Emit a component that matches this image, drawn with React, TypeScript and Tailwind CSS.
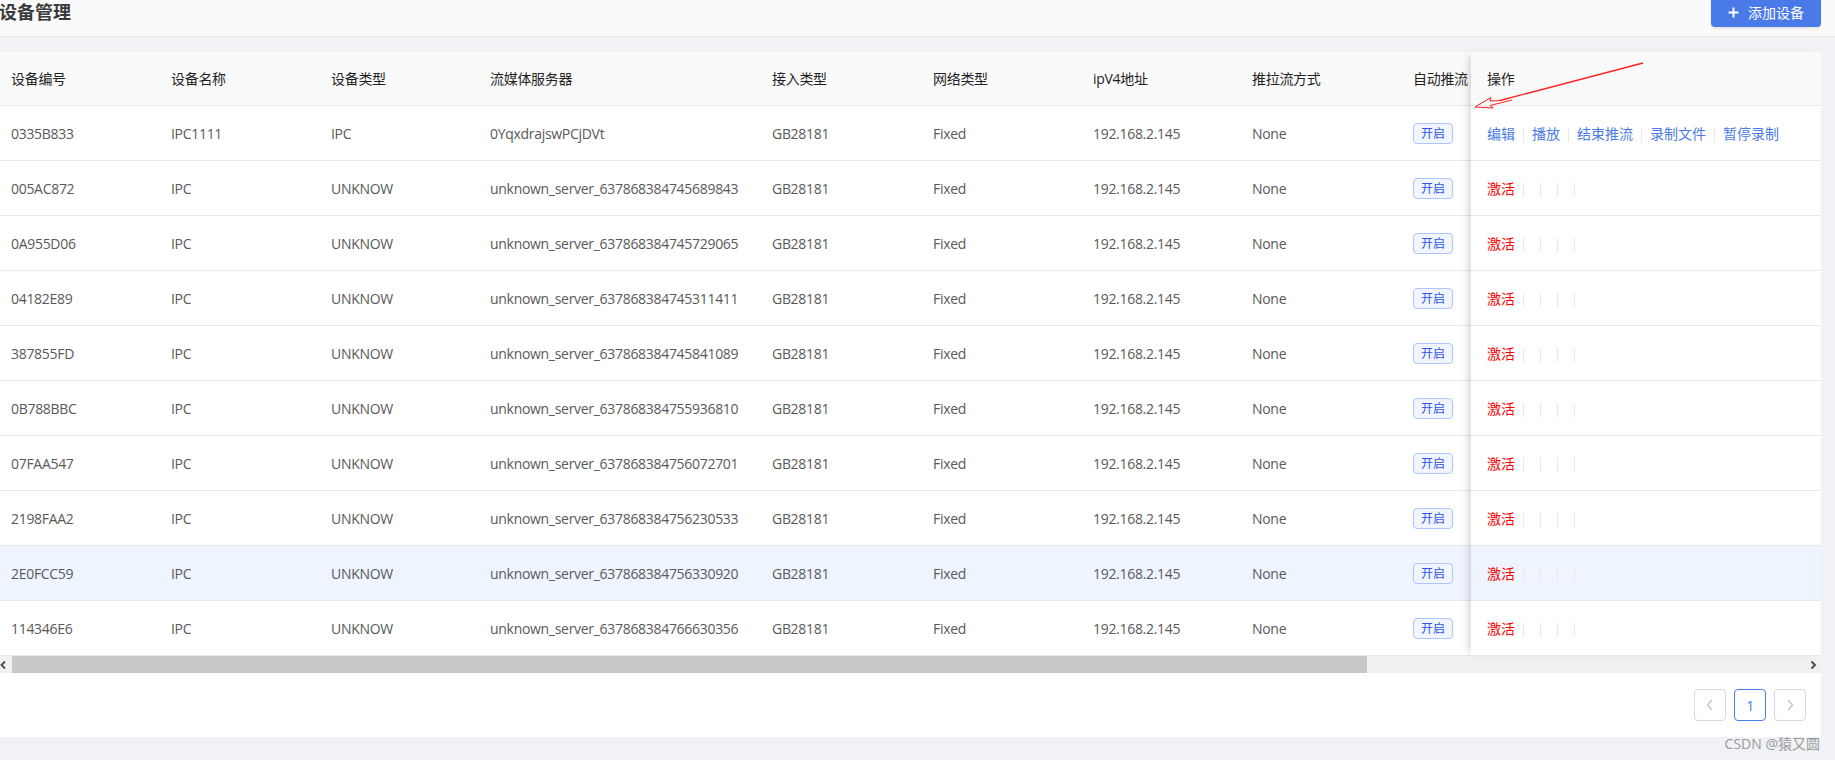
import React from "react";

const widths = [
  "w-[160px]",
  "w-[160px]",
  "w-[159px]",
  "w-[282px]",
  "w-[161px]",
  "w-[160px]",
  "w-[159px]",
  "w-[161px]",
  "w-[120px]",
];

const headers = ["设备编号", "设备名称", "设备类型", "流媒体服务器", "接入类型", "网络类型", "ipV4地址", "推拉流方式", "自动推流"];

const ids = [
  ["0335B833", "IPC1111", "IPC", "0YqxdrajswPCjDVt"],
  ["005AC872", "IPC", "UNKNOW", "unknown_server_637868384745689843"],
  ["0A955D06", "IPC", "UNKNOW", "unknown_server_637868384745729065"],
  ["04182E89", "IPC", "UNKNOW", "unknown_server_637868384745311411"],
  ["387855FD", "IPC", "UNKNOW", "unknown_server_637868384745841089"],
  ["0B788BBC", "IPC", "UNKNOW", "unknown_server_637868384755936810"],
  ["07FAA547", "IPC", "UNKNOW", "unknown_server_637868384756072701"],
  ["2198FAA2", "IPC", "UNKNOW", "unknown_server_637868384756230533"],
  ["2E0FCC59", "IPC", "UNKNOW", "unknown_server_637868384756330920"],
  ["114346E6", "IPC", "UNKNOW", "unknown_server_637868384766630356"],
];

const rows = ids.map((r) => [...r, "GB28181", "Fixed", "192.168.2.145", "None"]);

function Sep() {
  return <span className="mx-[8px] inline-block h-[14px] w-px bg-[#e8e8e8] align-middle" />;
}

export default function App() {
  return (
    <div className="relative h-[760px] w-[1835px] overflow-hidden bg-[#f0f2f5] font-['Open_Sans','Noto_Sans_CJK_SC',sans-serif] text-[14px] tracking-[-0.3px]">
      {/* top bar */}
      <div className="flex h-[37px] items-start justify-between border-b border-[#e8e8e8] bg-[#fafafa]">
        <div className="ml-[-1px] mt-[0px] text-[18px] font-bold leading-[24px] tracking-normal text-[#3a3a3a]">设备管理</div>
        <button className="mr-[14px] mt-[-5px] flex h-[32px] w-[110px] items-center justify-center gap-[9px] rounded-[4px] bg-[#4a7ae8] pt-[3px] text-[14px] tracking-normal text-white shadow-[0_2px_2px_rgba(0,0,0,0.08)]">
          <svg width="11" height="11" viewBox="0 0 11 11">
            <path d="M5.5 0.5V10.5M0.5 5.5H10.5" stroke="white" strokeWidth="2" />
          </svg>
          <span>添加设备</span>
        </button>
      </div>

      {/* card */}
      <div className="mr-[14px] mt-[15px] bg-white">
        <div className="flex">
          {/* scrolling part */}
          <div className="w-[1471px] overflow-hidden">
            <div className="flex h-[54px] items-center border-b border-[#e8e8e8] bg-[#fafafa] pl-[11px] text-[#1f1f1f]">
              {headers.map((h, i) => (
                <div key={i} className={`${widths[i]} shrink-0 whitespace-nowrap`}>
                  {h}
                </div>
              ))}
            </div>
            {rows.map((r, ri) => (
              <div
                key={ri}
                className={`flex h-[55px] items-center border-b border-[#e8e8e8] pl-[11px] text-[#595959] ${ri === 8 ? "bg-[#eff5ff]" : "bg-white"}`}
              >
                {r.map((c, ci) => (
                  <div key={ci} className={`${widths[ci]} shrink-0 whitespace-nowrap`}>
                    {c}
                  </div>
                ))}
                <div className={`${widths[8]} shrink-0`}>
                  <span className="inline-block h-[21px] rounded-[4px] border border-[#adc6ff] bg-[#f0f5ff] px-[7px] text-[12px] leading-[19px] tracking-normal text-[#2f54eb]">
                    开启
                  </span>
                </div>
              </div>
            ))}
          </div>
          {/* fixed op column */}
          <div className="relative z-10 w-[350px] shrink-0 shadow-[-6px_0_8px_-4px_rgba(0,0,0,0.18)]">
            <div className="flex h-[54px] items-center border-b border-[#e8e8e8] bg-[#fafafa] pl-[16px] text-[#1f1f1f]">操作</div>
            {rows.map((_, ri) => (
              <div
                key={ri}
                className={`flex h-[55px] items-center border-b border-[#e8e8e8] pl-[16px] tracking-normal ${ri === 8 ? "bg-[#eff5ff]" : "bg-white"}`}
              >
                {ri === 0 ? (
                  <span className="text-[#4a7ae8]">
                    编辑
                    <Sep />
                    播放
                    <Sep />
                    结束推流
                    <Sep />
                    录制文件
                    <Sep />
                    暂停录制
                  </span>
                ) : (
                  <span className="text-[#ff0000]">
                    激活
                    <Sep />
                    <Sep />
                    <Sep />
                    <Sep />
                  </span>
                )}
              </div>
            ))}
          </div>
        </div>

        {/* horizontal scrollbar */}
        <div className="flex h-[17px] bg-[#f1f1f1]">
          <div className="flex w-[12px] items-center justify-start">
            <svg width="8" height="10" viewBox="0 0 8 10">
              <path d="M5 1.5L1.5 5L5 8.5" stroke="#505050" strokeWidth="2" fill="none" />
            </svg>
          </div>
          <div className="h-full w-[1355px] bg-[#c8c8c8]" />
          <div className="flex-1" />
          <div className="flex w-[17px] items-center justify-center">
            <svg width="8" height="10" viewBox="0 0 8 10">
              <path d="M2.5 1.5L6 5L2.5 8.5" stroke="#505050" strokeWidth="2" fill="none" />
            </svg>
          </div>
        </div>

        {/* pagination */}
        <div className="flex h-[64px] items-center justify-end gap-[8px] pr-[15px]">
          <div className="flex h-[32px] w-[32px] items-center justify-center rounded-[4px] border border-[#d9d9d9]">
            <svg width="8" height="12" viewBox="0 0 8 12">
              <path d="M6 1L1.5 6L6 11" stroke="#c0c0c0" strokeWidth="1.2" fill="none" />
            </svg>
          </div>
          <div className="flex h-[32px] w-[32px] items-center justify-center rounded-[4px] border border-[#4a7ae8] text-[14px] text-[#4a7ae8]">1</div>
          <div className="flex h-[32px] w-[32px] items-center justify-center rounded-[4px] border border-[#d9d9d9]">
            <svg width="8" height="12" viewBox="0 0 8 12">
              <path d="M2 1L6.5 6L2 11" stroke="#c0c0c0" strokeWidth="1.2" fill="none" />
            </svg>
          </div>
        </div>
      </div>

      {/* watermark */}
      <div className="absolute bottom-[6px] right-[15px] text-[14px] tracking-normal text-[#9a9a9a]">CSDN @猿又圆</div>

      {/* red annotation arrow */}
      <svg className="pointer-events-none absolute left-0 top-0 z-20" width="1835" height="760" viewBox="0 0 1835 760">
        <line x1="1643" y1="63" x2="1500" y2="100.5" stroke="#ff2020" strokeWidth="1.3" />
        <line x1="1500" y1="100.5" x2="1490" y2="101" stroke="#ff2020" strokeWidth="1" />
        <line x1="1512" y1="100" x2="1490" y2="105.5" stroke="#ff2020" strokeWidth="1" />
        <path d="M1475 107 L1491 97.5 L1490 101 M1475 107 L1493 108 L1490 105.5" stroke="#ff2020" strokeWidth="1" fill="none" />
      </svg>
    </div>
  );
}
